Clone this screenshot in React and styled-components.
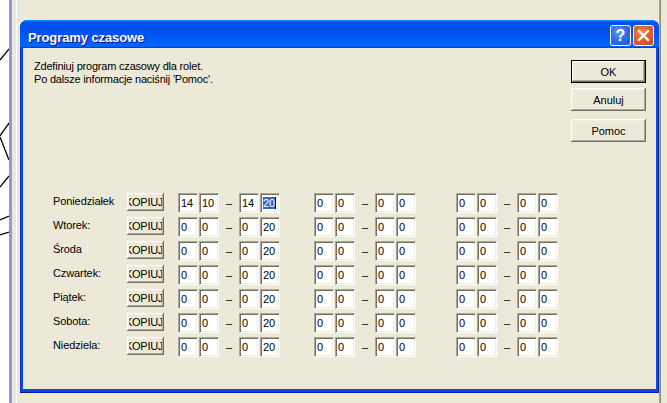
import React from "react";
import styled, { createGlobalStyle } from "styled-components";

const Global = createGlobalStyle`
  html, body { margin: 0; padding: 0; background: #ECE9D8; }
  body { font-family: "Liberation Sans", Arial, sans-serif; font-size: 11px; color: #000; }
  * { box-sizing: border-box; }
`;

const Desktop = styled.div`
  display: flex;
  width: 667px;
  height: 403px;
  overflow: hidden;
  background: #ECE9D8;
`;

const DiagramStrip = styled.div`
  flex: none;
  width: 9px;
  background: #fff;
  svg { display: block; }
`;

const SideBar = styled.div`
  flex: none;
  width: 3px;
  background: #8C9BDB;
`;

const Spacer = styled.div`
  flex: none;
  width: ${(p) => p.$w}px;
`;

const WhiteRule = styled.div`
  flex: none;
  width: 1px;
  background: #fff;
`;

const GrayRule = styled.div`
  flex: none;
  width: 2px;
  background: #8E8C82;
  border-left: 1px solid #ACA899;
`;

const Window = styled.div`
  flex: none;
  width: 639px;
  height: 373px;
  margin-top: 20px;
  display: flex;
  flex-direction: column;
  border-radius: 8px 8px 0 0;
  overflow: hidden;
  background: #0A49E2;
  box-shadow: inset -1px -1px #001EA0, inset 1px 0 #0831D9;
`;

const TitleBar = styled.div`
  flex: none;
  height: 28px;
  display: flex;
  align-items: center;
  padding: 0 5px 0 8px;
  background: linear-gradient(180deg, #0997ff, #0053ee 8%, #0050ee 40%, #0066ff 88%, #0066ff 93%, #005bff 95%, #003dd7 96%, #003dd7);
`;

const Title = styled.div`
  flex: 1;
  padding-top: 6px;
  line-height: 16px;
  font: bold 13px "Liberation Sans", Arial, sans-serif;
  color: #fff;
  text-shadow: 1px 1px #0F1089;
  letter-spacing: -0.1px;
`;

const CaptionButton = styled.div`
  flex: none;
  width: 21px;
  height: 21px;
  margin-top: 3px;
  margin-left: ${(p) => p.$ml || 0}px;
  border: 1px solid #fff;
  border-radius: 3px;
  display: flex;
  align-items: center;
  justify-content: center;
  color: #fff;
  font: bold 16px "Liberation Sans", Arial, sans-serif;
  background: ${(p) =>
    p.$close
      ? "radial-gradient(circle at 40% 35%, #F08A62 0%, #E2602F 45%, #C8451C 100%)"
      : "radial-gradient(circle at 40% 35%, #5E9BFA 0%, #2F6CE8 50%, #1D55D8 100%)"};
  svg { display: block; }
`;

const Body = styled.div`
  flex: 1;
  margin: 0 3px 4px 3px;
  background: #ECE9D8;
  padding: 12px 10px 0 11px;
  display: flex;
  flex-direction: column;
`;

const TopRow = styled.div`
  display: flex;
  justify-content: space-between;
  align-items: flex-start;
`;

const Intro = styled.div`
  font-size: 11px;
  line-height: 13px;
  letter-spacing: -0.2px;
`;

const ButtonColumn = styled.div`
  display: flex;
  flex-direction: column;
`;

const DialogButton = styled.button`
  width: 75px;
  height: 23px;
  margin-top: ${(p) => p.$mt || 0}px;
  padding: 0;
  border: none;
  background: #ECE9D8;
  color: #000;
  font: 11px "Liberation Sans", Arial, sans-serif;
  box-shadow: ${(p) =>
    p.$default
      ? "inset 0 0 0 1px #000, inset -2px -2px #716F64, inset 2px 2px #fff, inset -3px -3px #ACA899"
      : "inset -1px -1px #716F64, inset 1px 1px #fff, inset -2px -2px #ACA899, inset 2px 2px #F1EFE2"};
`;

const Schedule = styled.div`
  margin: 51px 0 0 19px;
  display: flex;
  flex-direction: column;
  gap: 4px;
`;

const Row = styled.div`
  display: flex;
  align-items: flex-start;
  height: 20px;
`;

const DayLabel = styled.div`
  flex: 0 0 74px;
  padding-top: 2px;
  line-height: 13px;
  white-space: nowrap;
  letter-spacing: -0.1px;
`;

const CopyButton = styled.button`
  flex: none;
  width: 37px;
  height: 18px;
  padding: 2px;
  border: none;
  background: #ECE9D8;
  box-shadow: inset -1px -1px #716F64, inset 1px 1px #fff, inset -2px -2px #ACA899, inset 2px 2px #F1EFE2;
  font: 11px "Liberation Sans", Arial, sans-serif;
  color: #000;
`;

const CopyFace = styled.div`
  width: 100%;
  height: 100%;
  overflow: hidden;
  display: flex;
  align-items: center;
  justify-content: flex-end;
  white-space: nowrap;
  line-height: 12px;
  span {
    flex: none;
    margin-right: -1px;
    letter-spacing: -0.3px;
  }
`;

const Group = styled.div`
  flex: none;
  display: flex;
  margin-left: ${(p) => p.$ml}px;
  gap: 1px;
`;

const Field = styled.div`
  flex: none;
  width: 20px;
  height: 20px;
  background: #fff;
  border: 1px solid;
  border-color: #ACA899 #fff #fff #ACA899;
  box-shadow: inset 1px 1px #716F64, inset -1px -1px #F1EFE2;
  padding-left: 2px;
  display: flex;
  align-items: center;
  overflow: hidden;
  white-space: nowrap;
  font-size: 11px;
`;

const Selected = styled.span`
  background: #316AC5;
  color: #fff;
  line-height: 12px;
  border-right: 1px solid #000;
`;

const Dash = styled.div`
  flex: none;
  width: 18px;
  text-align: center;
  line-height: 20px;
`;

const days = [
  { name: "Poniedziałek", vals: ["14", "10", "14", "20"], sel: true },
  { name: "Wtorek:", vals: ["0", "0", "0", "20"] },
  { name: "Środa", vals: ["0", "0", "0", "20"] },
  { name: "Czwartek:", vals: ["0", "0", "0", "20"] },
  { name: "Piątek:", vals: ["0", "0", "0", "20"] },
  { name: "Sobota:", vals: ["0", "0", "0", "20"] },
  { name: "Niedziela:", vals: ["0", "0", "0", "20"] },
];

function TimeGroup({ ml, vals, sel }) {
  return (
    <Group $ml={ml}>
      <Field>{vals[0]}</Field>
      <Field>{vals[1]}</Field>
      <Dash>–</Dash>
      <Field>{vals[2]}</Field>
      <Field>{sel ? <Selected>{vals[3]}</Selected> : vals[3]}</Field>
    </Group>
  );
}

export default function App() {
  const zeros = ["0", "0", "0", "0"];
  return (
    <>
      <Global />
      <Desktop>
        <DiagramStrip>
          <svg width="9" height="403" viewBox="0 0 9 403">
            <g stroke="#000" strokeWidth="1.3" fill="none">
              <line x1="0" y1="60" x2="9" y2="49" />
              <line x1="0" y1="136" x2="9" y2="123" />
              <line x1="0" y1="137" x2="9" y2="160" />
              <line x1="0" y1="187" x2="9" y2="176" />
              <line x1="0" y1="220" x2="9" y2="216" />
              <line x1="0" y1="235" x2="9" y2="232" />
            </g>
          </svg>
        </DiagramStrip>
        <SideBar />
        <Spacer $w={4} />
        <WhiteRule />
        <Spacer $w={3} />
        <Window>
          <TitleBar>
            <Title>Programy czasowe</Title>
            <CaptionButton>?</CaptionButton>
            <CaptionButton $close $ml={2}>
              <svg width="13" height="13" viewBox="0 0 13 13">
                <path d="M2 2 L11 11 M11 2 L2 11" stroke="#fff" strokeWidth="2.2" strokeLinecap="square" />
              </svg>
            </CaptionButton>
          </TitleBar>
          <Body>
            <TopRow>
              <Intro>
                Zdefiniuj program czasowy dla rolet.
                <br />
                Po dalsze informacje naciśnij 'Pomoc'.
              </Intro>
              <ButtonColumn>
                <DialogButton $default>OK</DialogButton>
                <DialogButton $mt={5}>Anuluj</DialogButton>
                <DialogButton $mt={8}>Pomoc</DialogButton>
              </ButtonColumn>
            </TopRow>
            <Schedule>
              {days.map((d) => (
                <Row key={d.name}>
                  <DayLabel>{d.name}</DayLabel>
                  <CopyButton>
                    <CopyFace>
                      <span>KOPIUJ</span>
                    </CopyFace>
                  </CopyButton>
                  <TimeGroup ml={14} vals={d.vals} sel={d.sel} />
                  <TimeGroup ml={34} vals={zeros} />
                  <TimeGroup ml={40} vals={zeros} />
                </Row>
              ))}
            </Schedule>
          </Body>
        </Window>
        <GrayRule />
      </Desktop>
    </>
  );
}
